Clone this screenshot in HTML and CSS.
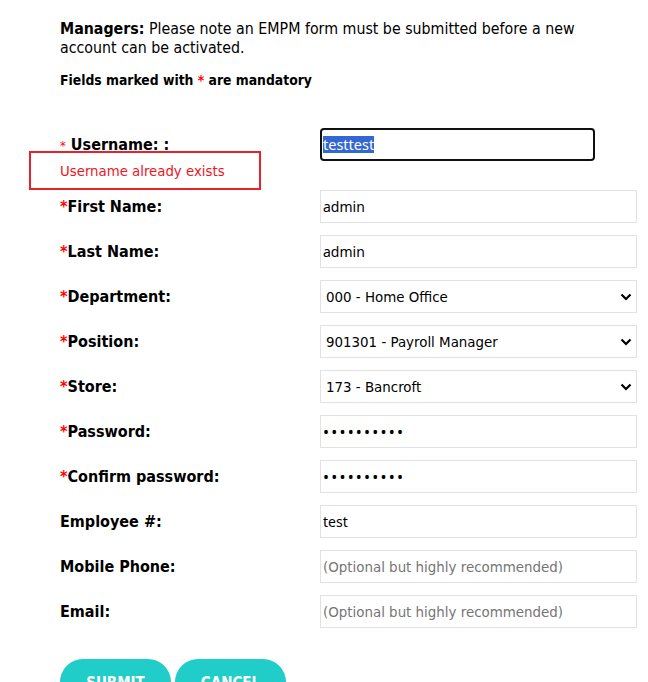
FILE: index.html
```html
<!DOCTYPE html>
<html lang="en">
<head>
<meta charset="utf-8">
<title>New Account</title>
<link rel="stylesheet" href="styles.css">
</head>
<body>
<div class="page">
  <p class="notice"><b>Managers:</b> Please note an EMPM form must be submitted before a new account can be activated.</p>
  <p class="mandatory">Fields marked with <span class="req">*</span> are mandatory</p>

  <form class="form">
    <div class="row">
      <label class="label"><span class="req-small">*</span> Username: :</label>
      <div class="input input-focus"><span class="sel">testtest</span></div>
    </div>
    <div class="error">Username already exists</div>

    <div class="row">
      <label class="label"><span class="req">*</span>First Name:</label>
      <input class="input" type="text" value="admin">
    </div>
    <div class="row">
      <label class="label"><span class="req">*</span>Last Name:</label>
      <input class="input" type="text" value="admin">
    </div>
    <div class="row">
      <label class="label"><span class="req">*</span>Department:</label>
      <div class="select-wrap">
        <select class="input select"><option>000 - Home Office</option></select>
        <svg class="chev" width="12" height="8" viewBox="0 0 12 8"><path d="M1.5 1.5 L6 6 L10.5 1.5" fill="none" stroke="#000" stroke-width="2.2"/></svg>
      </div>
    </div>
    <div class="row">
      <label class="label"><span class="req">*</span>Position:</label>
      <div class="select-wrap">
        <select class="input select"><option>901301 - Payroll Manager</option></select>
        <svg class="chev" width="12" height="8" viewBox="0 0 12 8"><path d="M1.5 1.5 L6 6 L10.5 1.5" fill="none" stroke="#000" stroke-width="2.2"/></svg>
      </div>
    </div>
    <div class="row">
      <label class="label"><span class="req">*</span>Store:</label>
      <div class="select-wrap">
        <select class="input select"><option>173 - Bancroft</option></select>
        <svg class="chev" width="12" height="8" viewBox="0 0 12 8"><path d="M1.5 1.5 L6 6 L10.5 1.5" fill="none" stroke="#000" stroke-width="2.2"/></svg>
      </div>
    </div>
    <div class="row">
      <label class="label"><span class="req">*</span>Password:</label>
      <input class="input pw" type="password" value="abcdefghij">
    </div>
    <div class="row">
      <label class="label"><span class="req">*</span>Confirm password:</label>
      <input class="input pw" type="password" value="abcdefghij">
    </div>
    <div class="row">
      <label class="label">Employee #:</label>
      <input class="input" type="text" value="test">
    </div>
    <div class="row">
      <label class="label">Mobile Phone:</label>
      <input class="input" type="text" placeholder="(Optional but highly recommended)">
    </div>
    <div class="row">
      <label class="label">Email:</label>
      <input class="input" type="text" placeholder="(Optional but highly recommended)">
    </div>

    <div class="buttons">
      <button type="button" class="btn">Submit</button>
      <button type="button" class="btn">Cancel</button>
    </div>
  </form>
</div>
</body>
</html>
```

FILE: styles.css
```css
html, body {
  margin: 0;
  padding: 0;
  background: #ffffff;
}

body {
  font-family: "DejaVu Sans Condensed", "DejaVu Sans", sans-serif;
  color: #000;
  overflow: hidden;
}

.page {
  padding: 19px 0 0 60px;
}

.notice {
  margin: 0;
  width: 540px;
  font-size: 15.8px;
  line-height: 19px;
}

.notice b {
  font-weight: bold;
}

.mandatory {
  margin: 14px 0 0 0;
  font-size: 13.8px;
  line-height: 18px;
  font-weight: bold;
}

.req {
  color: #f00;
}

.req-small {
  color: #f00;
  font-size: 13px;
  font-weight: normal;
}

.form {
  margin-top: 39px;
}

.row {
  display: flex;
  align-items: center;
  height: 33px;
  margin-bottom: 12px;
}

.label {
  width: 260px;
  flex: none;
  font-size: 16px;
  font-weight: bold;
}

.input {
  box-sizing: border-box;
  width: 317px;
  height: 33px;
  margin: 0;
  border: 1px solid #e2e2e2;
  border-radius: 0;
  background: #fff;
  padding: 0 2px;
  font-family: "Noto Sans", sans-serif;
  font-size: 14px;
  color: #000;
  outline: none;
}

.input::placeholder {
  font-family: "DejaVu Sans Condensed", sans-serif;
  font-size: 14.9px;
  color: #757575;
}

.input-focus {
  width: 275px;
  border: 2px solid #101010;
  border-radius: 4px;
  display: flex;
  align-items: center;
  padding: 0 0 0 1px;
}

.sel {
  background: #3367d1;
  color: #fff;
  line-height: 17px;
  font-size: 14.5px;
}

.row:first-child {
  margin-bottom: 0;
}

.error {
  box-sizing: border-box;
  width: 232px;
  height: 39px;
  margin: -10px 0 0 -31px;
  border: 2px solid #e8212a;
  padding-left: 29px;
  display: flex;
  align-items: center;
  color: #f0141e;
  font-size: 14.8px;
}

.select-wrap {
  position: relative;
  width: 317px;
  height: 33px;
}

.select {
  -webkit-appearance: none;
  appearance: none;
  font-family: "DejaVu Sans Condensed", sans-serif;
  font-size: 14.9px;
  padding-left: 5px;
}

.chev {
  position: absolute;
  right: 5px;
  top: 13px;
  pointer-events: none;
}

.pw {
  font-size: 16px;
  letter-spacing: 2.2px;
}

.buttons {
  display: flex;
  gap: 4px;
  margin-top: 31px;
}

.btn {
  width: 111px;
  height: 46px;
  border: none;
  border-radius: 23px;
  background: #20cdc8;
  color: #fff;
  font-family: "DejaVu Sans Condensed", sans-serif;
  font-size: 15px;
  font-weight: bold;
  text-transform: uppercase;
  padding: 15px 0 0 0;
  align-self: flex-start;
  display: flex;
  justify-content: center;
}
```
